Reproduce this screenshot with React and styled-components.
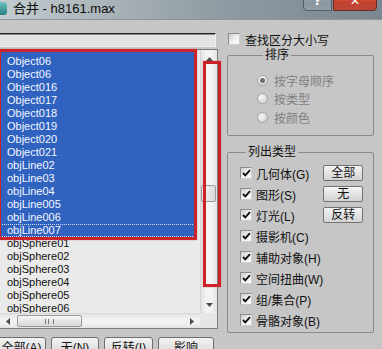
import React from 'react';
import styled, { createGlobalStyle } from 'styled-components';

const GlobalStyle = createGlobalStyle`
	html, body {
		margin: 0;
		padding: 0;
		background: #c6c6c6;
	}
	body {
		width: 382px;
		height: 349px;
		overflow: hidden;
	}
`;

const selectedItems = [
	'Object06',
	'Object06',
	'Object016',
	'Object017',
	'Object018',
	'Object019',
	'Object020',
	'Object021',
	'objLine02',
	'objLine03',
	'objLine04',
	'objLine005',
	'objLine006',
	'objLine007',
];

const otherItems = ['objSphere01', 'objSphere02', 'objSphere03', 'objSphere04', 'objSphere05', 'objSphere06'];

const sortModes = ['按字母顺序', '按类型', '按颜色'];

const listTypes = [
	['几何体', 'G'],
	['图形', 'S'],
	['灯光', 'L'],
	['摄影机', 'C'],
	['辅助对象', 'H'],
	['空间扭曲', 'W'],
	['组/集合', 'P'],
	['骨骼对象', 'B'],
];

const StyledWindow = styled.div`
	width: 382px;
	height: 349px;
	overflow: hidden;
	display: flex;
	flex-direction: column;
	background: #c6c6c6;
	font-family: 'Liberation Sans', 'Noto Sans CJK SC', sans-serif;
	color: #111;
`;

const StyledTitleBar = styled.div`
	flex: none;
	height: 19px;
	display: flex;
	align-items: flex-start;
	background: linear-gradient(90deg, #c3cccf 0%, #a9b3b8 28%, #8f9ba2 58%, #7b8790 100%);
	border-bottom: 1px solid #8f9497;
`;

const StyledAppIcon = styled.span`
	width: 7px;
	height: 13px;
	margin-top: 2px;
	border-radius: 0 3px 3px 0;
	background: linear-gradient(180deg, #6fc2c0, #25807f);
`;

const StyledTitle = styled.span`
	margin-left: 6px;
	font-size: 13px;
	line-height: 18px;
	color: #0c0c0c;
`;

const StyledCaption = styled.div`
	margin: -9px 5px 0 auto;
	display: flex;
	gap: 1px;
`;

const StyledCaptionButton = styled.span`
	width: ${({ wide }) => (wide ? '42px' : '27px')};
	height: 18px;
	display: flex;
	align-items: center;
	justify-content: center;
	border: 1px solid ${({ wide }) => (wide ? '#6d2a22' : '#4f5c66')};
	border-radius: ${({ wide }) => (wide ? '0 0 4px 0' : '0 0 0 4px')};
	background: ${({ wide }) =>
		wide ? 'linear-gradient(180deg, #d9816f, #c4402c 55%, #b9483a)' : 'linear-gradient(180deg, #b0bac1, #8a969f 55%, #929ea6)'};
	color: #fff;
	font-family: 'DejaVu Sans', sans-serif;
	font-weight: bold;
	font-size: 12px;
	line-height: 1;
`;

const StyledBody = styled.div`
	flex: 1;
	display: flex;
	min-height: 0;
`;

const StyledLeft = styled.div`
	flex: none;
	width: 218px;
	padding-top: 13px;
	display: flex;
	flex-direction: column;
`;

const StyledSearch = styled.input`
	box-sizing: border-box;
	width: 216px;
	height: 17px;
	margin: 0;
	padding: 0 4px;
	appearance: none;
	outline: none;
	border: none;
	border-top: 1px solid #222;
	border-right: 1px solid #efefef;
	border-bottom: 1px solid #efefef;
	box-shadow: inset 0 1px 0 #8a8a8a;
	background: #e3e3e3;
	font: 11px 'Liberation Sans', sans-serif;
`;

const StyledListBox = styled.div`
	position: relative;
	box-sizing: border-box;
	width: 218px;
	height: 280px;
	margin-top: 2px;
	display: grid;
	grid-template-columns: 1fr 17px;
	grid-template-rows: 1fr 15px;
	border: 1px solid #7d7d7d;
	border-left: none;
	background: #eaeaea;
`;

const StyledItems = styled.div`
	overflow: hidden;
	padding-top: 2px;
`;

const StyledSelection = styled.div`
	margin-right: 3px;
	padding-top: 3px;
	background: #2f63bf;
`;

const StyledRow = styled.div`
	height: 13px;
	padding-left: 7px;
	font-size: 11px;
	line-height: 13px;
	white-space: nowrap;
	color: ${({ selected }) => (selected ? '#f4f7ff' : '#111')};
	outline: ${({ focused }) => (focused ? '1px dotted rgba(255, 255, 255, 0.8)' : 'none')};
	outline-offset: -1px;
`;

const StyledVScroll = styled.div`
	display: flex;
	flex-direction: column;
	border-left: 1px solid #d2d2d2;
	background: linear-gradient(90deg, #e3e3e3, #f3f3f3 35%, #f3f3f3 65%, #e4e4e4);
`;

const StyledArrowBox = styled.span`
	flex: none;
	width: ${({ horizontal }) => (horizontal ? '16px' : 'auto')};
	height: ${({ horizontal }) => (horizontal ? 'auto' : '17px')};
	display: flex;
	align-items: center;
	justify-content: center;
`;

const StyledVThumb = styled.span`
	height: 15px;
	margin: 118px 1px 0 0;
	border: 1px solid #9a9a9a;
	border-radius: 2px;
	background: linear-gradient(90deg, #f4f4f4, #dadada);
`;

const StyledTrack = styled.span`
	flex: 1;
	display: flex;
	flex-direction: ${({ horizontal }) => (horizontal ? 'row' : 'column')};
`;

const StyledHScroll = styled.div`
	display: flex;
	border-top: 1px solid #d8d8d8;
	background: linear-gradient(180deg, #e3e3e3, #f3f3f3 40%, #f0f0f0 70%, #e2e2e2);
`;

const StyledHThumb = styled.span`
	width: 63px;
	margin: 1px 0 1px 1px;
	display: flex;
	align-items: center;
	justify-content: center;
	border: 1px solid #9a9a9a;
	border-radius: 2px;
	background: linear-gradient(180deg, #f6f6f6, #d8d8d8);
`;

const StyledGrip = styled.span`
	width: 7px;
	height: 5px;
	border-left: 1px solid #777;
	border-right: 1px solid #777;
	background: linear-gradient(90deg, transparent 2px, #777 2px, #777 3px, transparent 3px);
`;

const StyledCorner = styled.div`
	background: #e6e6e6;
`;

const StyledMark = styled.span`
	position: absolute;
	box-sizing: border-box;
	border: 3px solid #cc2229;
	box-shadow: 0 0 1px rgba(200, 30, 40, 0.6);
	pointer-events: none;
`;

const StyledSelectionMark = styled(StyledMark)`
	left: -2px;
	top: -1px;
	width: 199px;
	height: 191px;
`;

const StyledScrollMark = styled(StyledMark)`
	left: 203px;
	top: 11px;
	width: 18px;
	height: 226px;
`;

const StyledButtonRow = styled.div`
	margin: 8px 0 0 -3px;
	display: flex;
	gap: 5px;
`;

const StyledPushButton = styled.span`
	box-sizing: border-box;
	flex: none;
	width: ${({ width }) => width}px;
	height: 22px;
	border: 1px solid #6f6f6f;
	border-radius: 3px;
	background: linear-gradient(180deg, #f3f3f3, #e2e2e2 50%, #d4d4d4);
	text-align: center;
	font-size: 12px;
	line-height: 20px;
	color: #111;
`;

const StyledRight = styled.div`
	flex: 1;
	margin-left: 2px;
	padding: 12px 0 0 7px;
`;

const StyledCaseRow = styled.label`
	height: 14px;
	margin-left: 1px;
	display: flex;
	align-items: center;
	gap: 5px;
	font-size: 12px;
`;

const StyledCheckBox = styled.span`
	box-sizing: border-box;
	flex: none;
	width: 12px;
	height: 12px;
	display: flex;
	align-items: center;
	justify-content: center;
	border: 1px solid #8c8c8c;
	border-right-color: #cfcfcf;
	border-bottom-color: #cfcfcf;
	background: linear-gradient(135deg, #cdcdcd, #f4f4f4 60%, #fbfbfb);
`;

const StyledGroup = styled.fieldset`
	box-sizing: border-box;
	width: 147px;
	margin: ${({ first }) => (first ? '2px' : '9px')} 0 0;
	border: 1px solid #8a8a8a;
	border-radius: 2px;
	min-width: 0;
`;

const StyledSortGroup = styled(StyledGroup)`
	padding: 9px 0 8.5px 29px;
`;

const StyledTypeGroup = styled(StyledGroup)`
	padding: 3.5px 17px 1px 12px;
	display: grid;
	grid-template-columns: 1fr 40px;
`;

const StyledLegend = styled.legend`
	margin-left: 6px;
	padding: 0 2px;
	font-size: 12px;
	line-height: 14px;
`;

const StyledRadioRow = styled.div`
	height: 18.5px;
	display: flex;
	align-items: center;
	gap: 6px;
	font-size: 12px;
	color: #7f7f7f;
`;

const StyledRadio = styled.span`
	box-sizing: border-box;
	width: 11px;
	height: 11px;
	display: flex;
	align-items: center;
	justify-content: center;
	border: 1px solid #a2a2a2;
	border-radius: 50%;
	background: radial-gradient(circle at 35% 35%, #f6f6f6, #cdcdcd);

	&::after {
		content: '';
		width: 5px;
		height: 5px;
		border-radius: 50%;
		background: ${({ checked }) => (checked ? '#6e6e6e' : 'transparent')};
	}
`;

const StyledCheckRow = styled.label`
	height: 21px;
	display: flex;
	align-items: center;
	gap: 4px;
	font-size: 12px;
	white-space: nowrap;
`;

const StyledHotkey = styled.span`
	font-size: 12px;
`;

const StyledSideButtons = styled.div`
	padding-top: 2.5px;
	display: flex;
	flex-direction: column;
	gap: 5px;
`;

const StyledSideButton = styled.span`
	box-sizing: border-box;
	height: 16px;
	border: 1px solid #727272;
	border-radius: 2px;
	background: linear-gradient(180deg, #f5f5f5, #e3e3e3 50%, #d3d3d3);
	text-align: center;
	font-size: 12px;
	line-height: 14px;
`;

const Arrow = ({ dir }) => {
	const points = {
		up: '0,4 3.5,0 7,4',
		down: '0,0 7,0 3.5,4',
		left: '4,0 4,7 0,3.5',
		right: '0,0 4,3.5 0,7',
	};
	const vertical = dir === 'up' || dir === 'down';
	return (
		<svg width={vertical ? 7 : 4} height={vertical ? 4 : 7} viewBox={vertical ? '0 0 7 4' : '0 0 4 7'}>
			<polygon points={points[dir]} fill="#4b4b4b" />
		</svg>
	);
};

const Check = () => (
	<svg width="9" height="8" viewBox="0 0 9 8">
		<path d="M1 4 L3.3 6.4 L8 1.2" fill="none" stroke="#111" strokeWidth="1.9" />
	</svg>
);

const App = () => (
	<>
		<GlobalStyle />
		<StyledWindow>
			<StyledTitleBar>
				<StyledAppIcon />
				<StyledTitle>合并 - h8161.max</StyledTitle>
				<StyledCaption>
					<StyledCaptionButton>?</StyledCaptionButton>
					<StyledCaptionButton wide>✕</StyledCaptionButton>
				</StyledCaption>
			</StyledTitleBar>

			<StyledBody>
				<StyledLeft>
					<StyledSearch readOnly value="" />
					<StyledListBox>
						<StyledItems>
							<StyledSelection>
								{selectedItems.map((name, i) => (
									<StyledRow key={`s${i}`} selected focused={i === selectedItems.length - 1}>
										{name}
									</StyledRow>
								))}
							</StyledSelection>
							{otherItems.map((name) => (
								<StyledRow key={name}>{name}</StyledRow>
							))}
						</StyledItems>
						<StyledVScroll>
							<StyledArrowBox>
								<Arrow dir="up" />
							</StyledArrowBox>
							<StyledTrack>
								<StyledVThumb />
							</StyledTrack>
							<StyledArrowBox>
								<Arrow dir="down" />
							</StyledArrowBox>
						</StyledVScroll>
						<StyledHScroll>
							<StyledArrowBox horizontal>
								<Arrow dir="left" />
							</StyledArrowBox>
							<StyledTrack horizontal>
								<StyledHThumb>
									<StyledGrip />
								</StyledHThumb>
							</StyledTrack>
							<StyledArrowBox horizontal>
								<Arrow dir="right" />
							</StyledArrowBox>
						</StyledHScroll>
						<StyledCorner />
						<StyledSelectionMark />
						<StyledScrollMark />
					</StyledListBox>
					<StyledButtonRow>
						<StyledPushButton width={49}>全部(A)</StyledPushButton>
						<StyledPushButton width={48}>无(N)</StyledPushButton>
						<StyledPushButton width={49}>反转(I)</StyledPushButton>
						<StyledPushButton width={56}>影响</StyledPushButton>
					</StyledButtonRow>
				</StyledLeft>

				<StyledRight>
					<StyledCaseRow>
						<StyledCheckBox />
						查找区分大小写
					</StyledCaseRow>

					<StyledSortGroup first>
						<StyledLegend>排序</StyledLegend>
						{sortModes.map((mode, i) => (
							<StyledRadioRow key={mode}>
								<StyledRadio checked={i === 0} />
								{mode}
							</StyledRadioRow>
						))}
					</StyledSortGroup>

					<StyledTypeGroup>
						<StyledLegend>列出类型</StyledLegend>
						<div>
							{listTypes.map(([label, key]) => (
								<StyledCheckRow key={key}>
									<StyledCheckBox>
										<Check />
									</StyledCheckBox>
									<span>
										{label}
										<StyledHotkey>({key})</StyledHotkey>
									</span>
								</StyledCheckRow>
							))}
						</div>
						<StyledSideButtons>
							<StyledSideButton>全部</StyledSideButton>
							<StyledSideButton>无</StyledSideButton>
							<StyledSideButton>反转</StyledSideButton>
						</StyledSideButtons>
					</StyledTypeGroup>
				</StyledRight>
			</StyledBody>
		</StyledWindow>
	</>
);

export default App;
